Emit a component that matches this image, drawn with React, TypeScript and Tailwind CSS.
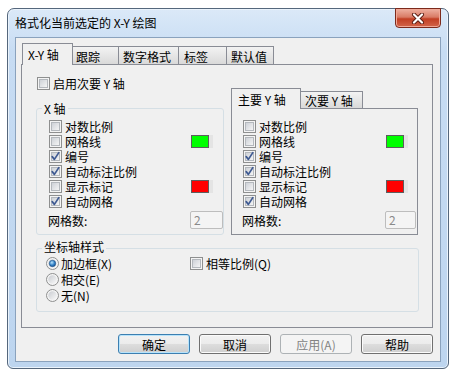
import React, { useId } from "react";

function CheckBox({ checked = false }: { checked?: boolean }) {
  const id = useId();
  return (
    <svg width="13" height="13" viewBox="0 0 13 13" className="shrink-0">
      <defs>
        <linearGradient id={id} x1="0" y1="0" x2="1" y2="1">
          <stop offset="0" stopColor="#cbcfd5" />
          <stop offset="1" stopColor="#f7f7f7" />
        </linearGradient>
      </defs>
      <rect x="0.5" y="0.5" width="12" height="12" fill="#f4f4f4" stroke="#8e8f8f" />
      <rect x="2.5" y="2.5" width="8" height="8" fill={`url(#${id})`} stroke="#b4b8bd" />
      {checked && (
        <path d="M3.2 6.6 L5.4 9.4 L9.8 2.6" fill="none" stroke="#3f5a92" strokeWidth="1.7" strokeLinecap="round" strokeLinejoin="round" />
      )}
    </svg>
  );
}

function Radio({ checked = false }: { checked?: boolean }) {
  const id = useId();
  return (
    <svg width="13" height="13" viewBox="0 0 13 13" className="shrink-0">
      <defs>
        <linearGradient id={id + "a"} x1="0" y1="0" x2="1" y2="1">
          <stop offset="0" stopColor="#c9ccd1" />
          <stop offset="1" stopColor="#f9f9f9" />
        </linearGradient>
        <radialGradient id={id + "b"} cx="0.4" cy="0.35" r="0.7">
          <stop offset="0" stopColor="#b9e3fb" />
          <stop offset="0.6" stopColor="#2f7fc6" />
          <stop offset="1" stopColor="#1b4f8a" />
        </radialGradient>
      </defs>
      <circle cx="6.5" cy="6.5" r="6" fill="#f4f4f4" stroke="#8e8f8f" />
      <circle cx="6.5" cy="6.5" r="4.2" fill={`url(#${id}a)`} />
      {checked && <circle cx="6.5" cy="6.5" r="3.2" fill={`url(#${id}b)`} stroke="#1d4f86" strokeWidth="0.6" />}
    </svg>
  );
}

function Swatch({ color }: { color: string }) {
  return (
    <span className="flex h-[13px] ml-auto">
      <span className="w-[18px] border border-[#5e5e5e]" style={{ backgroundColor: color }} />
      <span className="w-[4px] bg-[#e4e4e4]" />
    </span>
  );
}

function CheckRow({ label, checked, swatch }: { label: string; checked?: boolean; swatch?: string }) {
  return (
    <div className="flex items-center h-[15px] gap-[3px]">
      <CheckBox checked={checked} />
      <span className="leading-[14px]">{label}</span>
      {swatch && <Swatch color={swatch} />}
    </div>
  );
}

function AxisOptions() {
  return (
    <>
      <CheckRow label="对数比例" />
      <CheckRow label="网格线" swatch="#00ff00" />
      <CheckRow label="编号" checked />
      <CheckRow label="自动标注比例" checked />
      <CheckRow label="显示标记" swatch="#ff0000" />
      <CheckRow label="自动网格" checked />
    </>
  );
}

function GridCount({ width }: { width: string }) {
  return (
    <div className="flex items-center justify-between mt-[2px]">
      <span className="-ml-px">网格数:</span>
      <div className={`${width} h-[18px] border border-[#bdbdbd] rounded-[2px] bg-[#f4f4f4] pl-[3px] text-[#8a8a8a] leading-[16px]`}>2</div>
    </div>
  );
}

function Button({ label, primary, disabled }: { label: string; primary?: boolean; disabled?: boolean }) {
  const base = "w-[72px] h-[20px] rounded-[3px] border flex items-center justify-center";
  if (disabled) {
    return <div className={`${base} border-[#adb2b5] bg-[#f4f4f4] text-[#838383]`}>{label}</div>;
  }
  return (
    <div
      className={`${base} ${
        primary
          ? "border-[#3c7fb1] shadow-[inset_0_0_0_1px_#b7e3fb]"
          : "border-[#707070] shadow-[inset_0_0_0_1px_#fbfbfb]"
      } bg-[linear-gradient(#f2f2f2_0%,#ebebeb_50%,#dddddd_50%,#cfcfcf_100%)]`}
    >
      {label}
    </div>
  );
}

export default function App() {
  return (
    <div className="w-[454px] h-[374px] bg-white pt-[8px] pl-[7px] text-[12px] leading-[15px] text-black font-['Noto_Sans_CJK_SC',sans-serif]">
      {/* window frame */}
      <div className="w-[442px] h-[361px] border border-[#55677c] rounded-t-[7px] rounded-b-[6px] bg-[linear-gradient(#dbe9f8_0%,#c7dcf3_12%,#bdd5ef_100%)] shadow-[inset_0_0_0_1px_#eaf3fc] flex flex-col px-[7px] pb-[6px]">
        {/* title bar */}
        <div className="h-[28px] flex justify-between items-start shrink-0">
          <span className="pt-[6px]">格式化当前选定的 X-Y 绘图</span>
          <div className="-mt-px w-[46px] h-[20px] rounded-b-[4px] border border-[#7c2a1c] bg-[linear-gradient(#eeb1a1_0%,#d97b65_45%,#c23f24_55%,#d2654a_100%)] shadow-[inset_0_0_0_1px_#f1a896] flex items-center justify-center">
            <svg width="14" height="11" viewBox="0 0 14 11">
              <path d="M3 1.5 L11 9.5 M11 1.5 L3 9.5" stroke="#5a1d13" strokeWidth="4" strokeLinecap="round" />
              <path d="M3 1.5 L11 9.5 M11 1.5 L3 9.5" stroke="#ffffff" strokeWidth="2.2" strokeLinecap="round" />
            </svg>
          </div>
        </div>

        {/* client area */}
        <div className="flex-1 border border-[#8aa2bd] bg-[#f0f0f0] pl-[5px] pt-[5px]">
          {/* tabs */}
          <div className="flex items-end h-[21px]">
            <div className="relative z-10 ml-[1px] w-[51px] h-[22px] -mb-px border border-b-0 border-[#898c95] bg-[#f0f0f0] pl-[5px] pt-[3px]">X-Y 轴</div>
            <div className="w-[47px] h-[18px] -ml-px border border-b-0 border-[#898c95] bg-[linear-gradient(#f3f3f3,#d9d9d9)] pl-[3px] pt-[2px]">跟踪</div>
            <div className="w-[61px] h-[18px] -ml-px border border-b-0 border-[#898c95] bg-[linear-gradient(#f3f3f3,#d9d9d9)] pl-[4px] pt-[2px]">数字格式</div>
            <div className="w-[49px] h-[18px] -ml-px border border-b-0 border-[#898c95] bg-[linear-gradient(#f3f3f3,#d9d9d9)] pl-[5px] pt-[2px]">标签</div>
            <div className="w-[48px] h-[18px] -ml-px border border-b-0 border-[#898c95] bg-[linear-gradient(#f3f3f3,#d9d9d9)] pl-[4px] pt-[2px]">默认值</div>
          </div>

          {/* tab page */}
          <div className="w-[412px] h-[264px] border border-[#898c95] bg-[#f0f0f0] pl-[14px]">
            <div className="flex items-end gap-[7px]">
              {/* left column */}
              <div className="w-[188px]">
                <div className="flex items-center h-[13px] mt-[12px] ml-[1px] gap-[3px]">
                  <CheckBox />
                  <span>启用次要 Y 轴</span>
                </div>
                <fieldset className="mt-[11px] border border-[#d5dfe5] rounded-[3px] pl-[12px] pb-[5px]">
                  <legend className="-ml-[7px] px-[2px]">X 轴</legend>
                  <div className="pt-[3px] pr-[10px]">
                    <AxisOptions />
                  </div>
                  <GridCount width="w-[33px]" />
                </fieldset>
              </div>

              {/* right column: Y axis tabs */}
              <div className="w-[187px]">
                <div className="flex items-end h-[20px]">
                  <div className="relative z-10 w-[70px] h-[21px] -mb-px border border-b-0 border-[#898c95] bg-[#f0f0f0] pl-[6px] pt-[3px]">主要 Y 轴</div>
                  <div className="w-[63px] h-[17px] -ml-px border border-b-0 border-[#898c95] bg-[linear-gradient(#f3f3f3,#d9d9d9)] pl-[4px] pt-[1px]">次要 Y 轴</div>
                </div>
                <div className="border border-[#898c95] pl-[11px] pt-[10px] pb-[5px] pr-[1px]">
                  <div className="pr-[8px]">
                    <AxisOptions />
                  </div>
                  <GridCount width="w-[31px]" />
                </div>
              </div>
            </div>

            {/* axis style */}
            <fieldset className="mt-[4px] w-[383px] border border-[#d5dfe5] rounded-[3px] pl-[9px] pb-[8px]">
              <legend className="-ml-[4px] px-[2px] pb-[4px]">坐标轴样式</legend>
              <div className="-mt-[3px]">
                <div className="flex items-center h-[16px]">
                  <div className="w-[144px] flex items-center gap-[2px]">
                    <Radio checked />
                    <span>加边框(X)</span>
                  </div>
                  <div className="flex items-center gap-[3px]">
                    <CheckBox />
                    <span>相等比例(Q)</span>
                  </div>
                </div>
                <div className="flex items-center h-[16px] gap-[2px]">
                  <Radio />
                  <span>相交(E)</span>
                </div>
                <div className="flex items-center h-[16px] gap-[2px]">
                  <Radio />
                  <span>无(N)</span>
                </div>
              </div>
            </fieldset>
          </div>

          {/* buttons */}
          <div className="w-[412px] flex justify-end gap-[9px] mt-[6px]">
            <Button label="确定" primary />
            <Button label="取消" />
            <Button label="应用(A)" disabled />
            <Button label="帮助" />
          </div>
        </div>
      </div>
    </div>
  );
}
